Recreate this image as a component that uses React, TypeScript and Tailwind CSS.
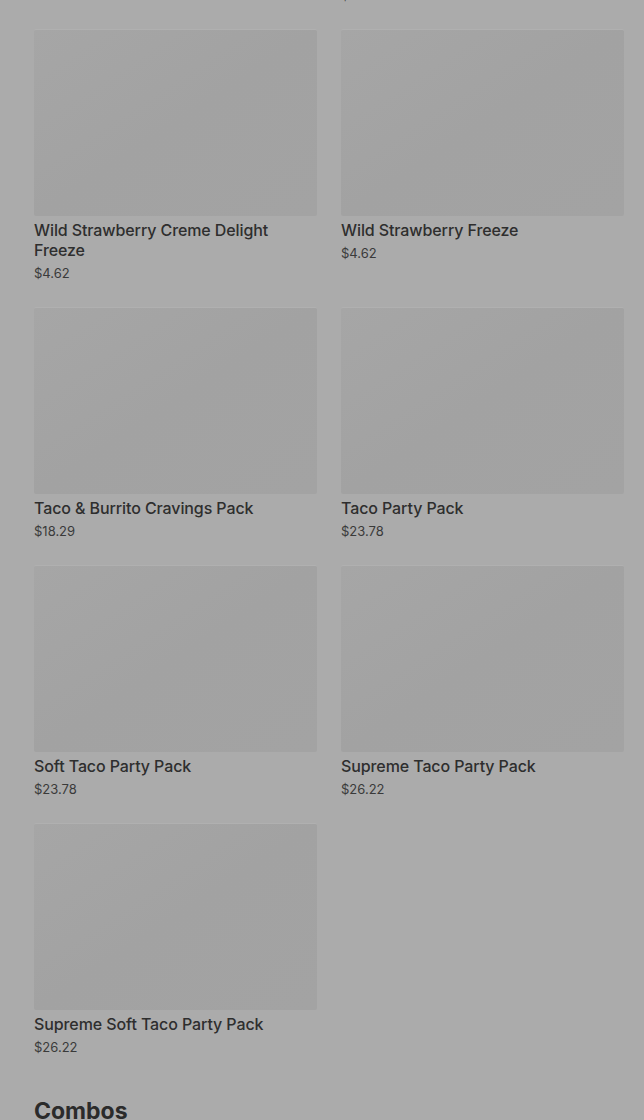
import React from 'react';

interface Item {
  name: string;
  price: string;
}

const rows: Item[][] = [
  [
    { name: 'Wild Strawberry Creme Delight Freeze', price: '$4.62' },
    { name: 'Wild Strawberry Freeze', price: '$4.62' },
  ],
  [
    { name: 'Taco & Burrito Cravings Pack', price: '$18.29' },
    { name: 'Taco Party Pack', price: '$23.78' },
  ],
  [
    { name: 'Soft Taco Party Pack', price: '$23.78' },
    { name: 'Supreme Taco Party Pack', price: '$26.22' },
  ],
  [{ name: 'Supreme Soft Taco Party Pack', price: '$26.22' }],
];

const font = { fontFamily: 'Inter, "Noto Sans", sans-serif' };

const ItemCard: React.FC<{ item: Item }> = ({ item }) => (
  <div className="flex flex-col">
    <div className="h-[187px] w-full rounded-[2px] border-t border-[#b0b0b0] bg-gradient-to-br from-[#a6a6a6] via-[#a2a2a2] to-[#a3a3a3]" />
    <div className="mt-1 text-[16px] font-medium leading-5 text-[#2e2e2e] tracking-[-0.1px]">{item.name}</div>
    <div className="mt-[3px] text-[13px] leading-5 text-[#3a3a3a]">{item.price}</div>
  </div>
);

export default function App() {
  return (
    <div className="h-[1120px] w-[644px] overflow-hidden bg-[#ababab]" style={font}>
      <div className="pl-[34px] pr-[20px]">
        {/* tail of the row scrolled above the fold */}
        <div className="grid grid-cols-2 items-start gap-x-6">
          <div />
          <div className="-mt-[15px] text-[13px] leading-5 text-[#3a3a3a]">$4.62</div>
        </div>
        <div className="mt-6 flex flex-col gap-6">
          {rows.map((row, i) => (
            <div key={i} className="grid grid-cols-2 gap-x-6">
              {row.map((item) => (
                <ItemCard key={item.name} item={item} />
              ))}
            </div>
          ))}
        </div>
        <h2 className="mt-[40px] text-[23px] font-bold leading-7 text-[#2b2b2b]">Combos</h2>
      </div>
    </div>
  );
}
